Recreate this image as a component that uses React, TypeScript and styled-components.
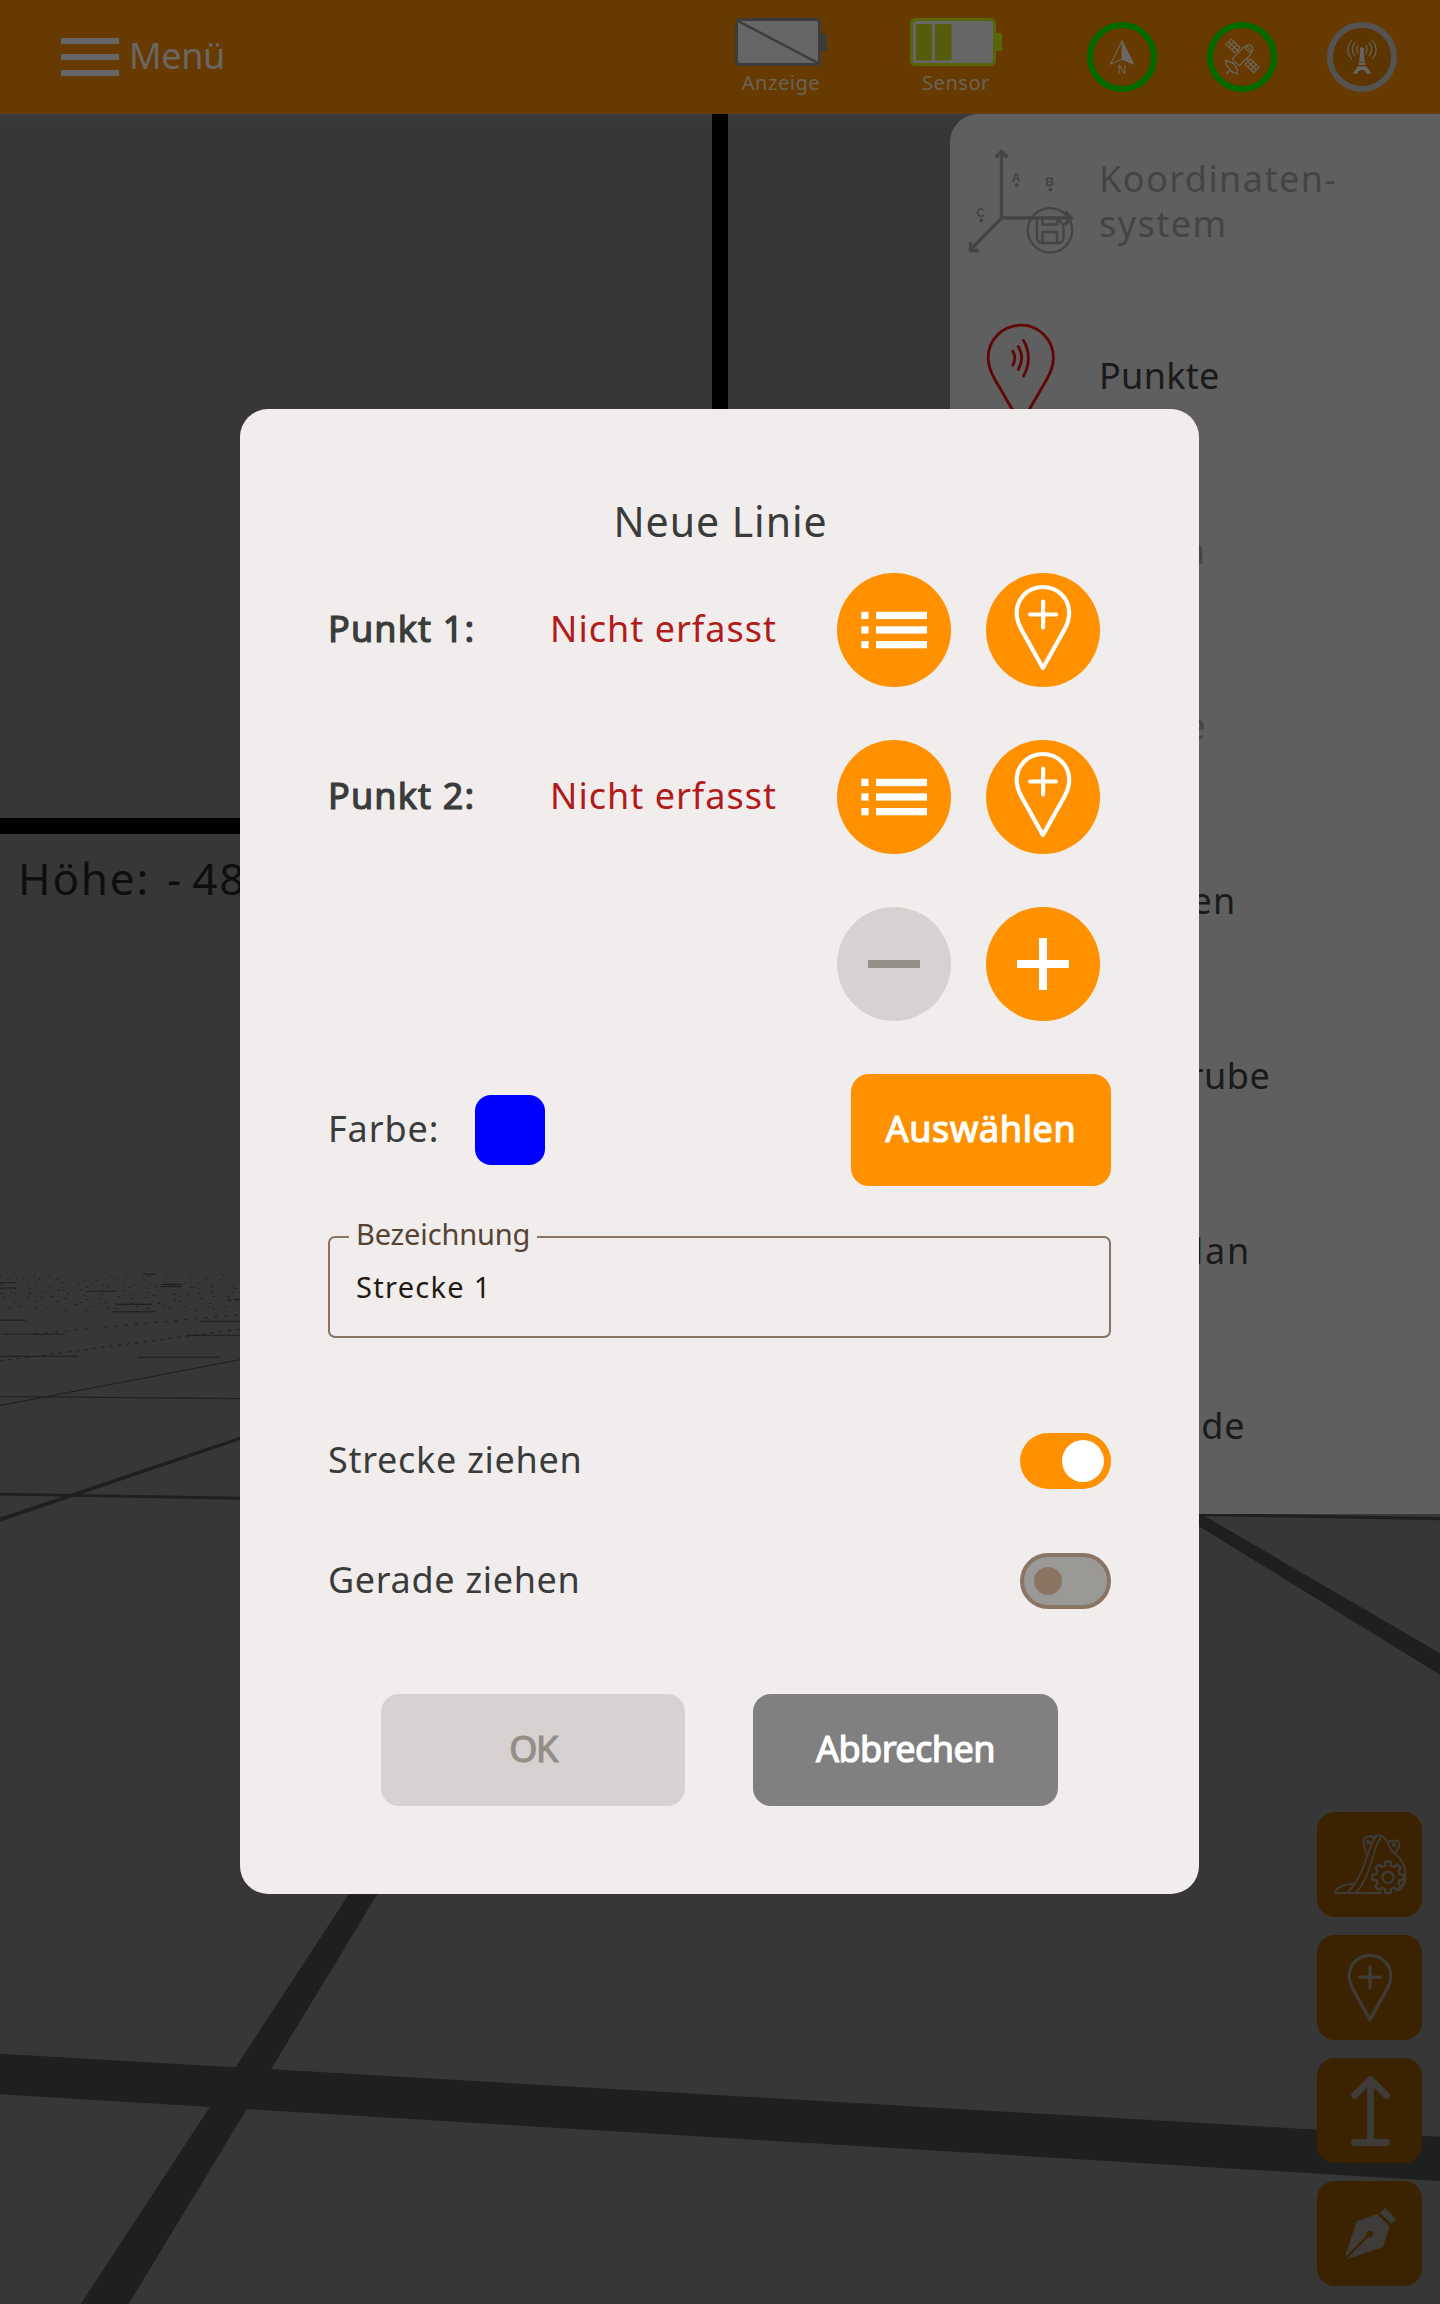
import React from 'react';
import styled, { createGlobalStyle } from 'styled-components';

const GlobalStyle = createGlobalStyle`
  * { box-sizing: border-box; }
  html, body { margin: 0; padding: 0; background: #373737; }
  body { font-family: "Noto Sans", "Open Sans", sans-serif; }
  button, input { font-family: inherit; border: 0; padding: 0; background: none; }
  svg { display: block; flex: none; }
`;

const INK = '#3a3b3b';
const ORANGE = '#ff9100';
const GRID = '#1f1f1f';

const Screen = styled.div`
  position: relative;
  width: 1440px;
  height: 2304px;
  overflow: hidden;
  display: flex;
  flex-direction: column;
  background: #373737;
`;

/* ---------- top bar ---------- */

const TopBar = styled.header`
  height: 114px;
  flex: none;
  display: flex;
  align-items: flex-start;
  justify-content: space-between;
  padding: 0 43px 0 61px;
  background: #663a00;
`;

const MenuButton = styled.button`
  display: flex;
  align-items: center;
  gap: 10px;
  height: 111px;
  color: #6a6663;
  font-size: 36px;
  letter-spacing: -0.4px;
`;

const Burger = styled.span`
  display: flex;
  flex-direction: column;
  gap: 10px;
  margin-top: 3px;
  & > i { display: block; width: 58px; height: 6px; background: #666; }
`;

const StatusGroup = styled.div`
  display: flex;
  align-items: flex-start;
`;

const Battery = styled.div`
  display: flex;
  flex-direction: column;
  align-items: center;
  width: 92px;
  margin: 18px 83px 0 0;
  color: #6d6257;
  font-size: 20px;
  line-height: 24px;
  letter-spacing: 0.55px;
  & > svg { margin-bottom: 5px; }
`;

const Rings = styled.div`
  display: flex;
  gap: 50px;
  margin: 22px 0 0 2px;
`;

const Ring = styled.div<{ $color: string; $fill?: string }>`
  width: 70px;
  height: 70px;
  border-radius: 50%;
  border: 6px solid ${p => p.$color};
  background: ${p => p.$fill ?? 'transparent'};
  & > svg { margin: -6px; }
`;

/* ---------- viewports ---------- */

const UpperViews = styled.section`
  display: grid;
  grid-template-columns: 712px 1fr;
  gap: 16px;
  height: 720px;
  flex: none;
  padding-bottom: 16px;
  background: #000;
`;

const View = styled.div`
  background: linear-gradient(#3d3c3c, #373737 8px);
`;

const SceneView = styled.section`
  position: relative;
  flex: 1;
  background: #373737;
`;

const SceneCanvas = styled.svg`
  position: absolute;
  inset: 0;
`;

const HeightLabel = styled.div`
  position: relative;
  display: flex;
  gap: 17px;
  padding: 14px 0 0 18px;
  color: #0e0e0e;
  font-size: 44px;
  line-height: 60px;
  letter-spacing: 1.8px;
  white-space: nowrap;
`;

const Sign = styled.span`
  letter-spacing: 11px;
`;

/* ---------- drawer ---------- */

const Drawer = styled.nav`
  position: absolute;
  top: 114px;
  right: 0;
  width: 490px;
  height: 1400px;
  overflow: hidden;
  border-top-left-radius: 28px;
  background: #5f5f5f;
`;

const DrawerItem = styled.div<{ $disabled?: boolean; $spacing: number }>`
  display: flex;
  align-items: center;
  gap: 1px;
  height: 175px;
  &:first-child { height: 173px; }
  color: ${p => (p.$disabled ? '#454344' : '#1a1a1a')};
  font-size: 36px;
  line-height: 45px;
  letter-spacing: ${p => p.$spacing}px;
  white-space: pre-line;
`;

const DrawerLabel = styled.span`
  padding-top: 1px;
`;

const DrawerIcon = styled.svg`
  width: 148px;
  height: 100%;
`;

/* ---------- floating buttons ---------- */

const ToolStack = styled.div`
  position: absolute;
  right: 18px;
  bottom: 18px;
  display: flex;
  flex-direction: column;
  gap: 18px;
`;

const ToolButton = styled.button`
  width: 105px;
  height: 105px;
  display: flex;
  align-items: center;
  justify-content: center;
  border-radius: 18px;
  background: #3b2200;
  color: #3f3b38;
`;

/* ---------- dialog ---------- */

const Dialog = styled.section`
  position: absolute;
  left: 240px;
  top: 409px;
  width: 959px;
  height: 1485px;
  padding: 87px 88px 88px;
  display: flex;
  flex-direction: column;
  border-radius: 28px;
  background: #f0edec;
  color: ${INK};
`;

const Title = styled.h1`
  margin: 0 0 27px;
  padding-left: 2px;
  font-size: 41px;
  font-weight: 400;
  line-height: 50px;
  letter-spacing: 0.96px;
  text-align: center;
`;

const PointRow = styled.div`
  display: flex;
  align-items: center;
  height: 114px;
  margin-bottom: 53px;
  padding-right: 11px;
`;

const Text = styled.span<{ $spacing?: number; $strong?: boolean; $color?: string; $width?: number }>`
  font-size: 36px;
  line-height: 50px;
  padding-bottom: 2px;
  white-space: nowrap;
  color: ${p => p.$color ?? INK};
  letter-spacing: ${p => p.$spacing ?? 0}px;
  width: ${p => (p.$width ? `${p.$width}px` : 'auto')};
  -webkit-text-stroke: ${p => (p.$strong ? '1.2px currentColor' : '0')};
`;

const RoundButtons = styled.div`
  display: flex;
  gap: 35px;
  margin-left: auto;
`;

const RoundButton = styled.button<{ $disabled?: boolean; $lift?: number }>`
  width: 114px;
  height: 114px;
  display: flex;
  align-items: center;
  justify-content: center;
  padding-bottom: ${p => p.$lift ?? 0}px;
  border-radius: 50%;
  background: ${p => (p.$disabled ? '#d7d2d1' : ORANGE)};
  color: ${p => (p.$disabled ? '#938f87' : '#fff')};
`;

const ColorRow = styled.div`
  display: flex;
  align-items: center;
  height: 112px;
  margin-bottom: 50px;
  & > button { margin-left: auto; }
`;

const Swatch = styled.span`
  width: 70px;
  height: 70px;
  border-radius: 16px;
  background: #0000ff;
`;

const Button = styled.button<{ $bg: string; $fg: string; $width: number; $spacing: number }>`
  width: ${p => p.$width}px;
  height: 112px;
  padding-bottom: 4px;
  border-radius: 18px;
  background: ${p => p.$bg};
  color: ${p => p.$fg};
  font-size: 36px;
  letter-spacing: ${p => p.$spacing}px;
  -webkit-text-stroke: 1.2px currentColor;
`;

const Field = styled.label`
  position: relative;
  display: flex;
  height: 102px;
  margin-bottom: 95px;
  border: 2px solid #8a7464;
  border-radius: 7px;
`;

const FieldLabel = styled.span`
  position: absolute;
  left: 19px;
  top: -24px;
  width: 188px;
  padding-left: 7px;
  background: #f0edec;
  color: #564334;
  font-size: 29px;
  line-height: 40px;
  letter-spacing: -0.15px;
`;

const FieldInput = styled.input`
  flex: 1;
  padding: 0 26px 2px;
  color: #1f1a14;
  font-size: 29px;
  letter-spacing: 1.3px;
  outline: 0;
`;

const SwitchRow = styled.div`
  display: flex;
  align-items: center;
  justify-content: space-between;
  height: 56px;
  margin-bottom: 64px;
`;

const Switch = styled.span<{ $on?: boolean }>`
  display: flex;
  align-items: center;
  justify-content: ${p => (p.$on ? 'flex-end' : 'flex-start')};
  width: 91px;
  height: 56px;
  padding: ${p => (p.$on ? '0 7px' : '0 10px')};
  border: ${p => (p.$on ? '0' : '4px solid #8a7464')};
  border-radius: 28px;
  background: ${p => (p.$on ? ORANGE : '#9b9996')};
  &::after {
    content: "";
    width: ${p => (p.$on ? 42 : 28)}px;
    height: ${p => (p.$on ? 42 : 28)}px;
    border-radius: 50%;
    background: ${p => (p.$on ? '#fff' : '#8a7464')};
  }
`;

const Actions = styled.div`
  display: flex;
  gap: 68px;
  margin: 21px 0 0 53px;
`;

/* ---------- icons ---------- */

const PinPlus = ({ height }: { height: number }) => (
  <svg width={(height * 58) / 87} height={height} viewBox="28.3 12 58 87" fill="none" stroke="currentColor" strokeWidth="4.2" strokeLinecap="round" strokeLinejoin="round">
    <path d="M57.2 15C42.5 15 31 26.5 31 41c0 6 2 11.5 5 17l21.2 38 21.3-38c3-5.5 5-11 5-17C83.5 26.5 72 15 57.2 15Z" />
    <path d="M57.4 29.5v26M44.4 42.500h26" />
  </svg>
);

const ListIcon = () => (
  <svg width="114" height="114" viewBox="0 0 114 114" fill="currentColor">
    {[38.8, 53.3, 68].map(y => (
      <React.Fragment key={y}>
        <rect x="24.3" y={y} width="7.3" height="7.3" />
        <rect x="39" y={y} width="51" height="7.3" />
      </React.Fragment>
    ))}
  </svg>
);

const SignIcon = ({ plus }: { plus?: boolean }) => (
  <svg width="52" height="52" viewBox="0 0 52 52" fill="currentColor">
    <rect x="0" y="22" width="52" height="8" />
    {plus && <rect x="22" y="0" width="8" height="52" />}
  </svg>
);

const EmptyBattery = () => (
  <svg width="92" height="48" viewBox="0 0 92 48">
    <rect x="84" y="15.5" width="8" height="17.5" rx="1.5" fill="#3c3c3c" />
    <rect x="1.5" y="1.5" width="83" height="45" rx="4" fill="#666" stroke="#3c3c3c" strokeWidth="3" />
    <path d="M3 3l80 42" stroke="#3c3c3c" strokeWidth="2.4" />
  </svg>
);

const HalfBattery = () => (
  <svg width="92" height="48" viewBox="0 0 92 48">
    <rect x="84" y="15" width="8" height="18" fill="#586609" />
    <rect x="1.5" y="1.5" width="83" height="45" rx="4" fill="#666" stroke="#586609" strokeWidth="3" />
    <rect x="6" y="6" width="16" height="36.5" rx="1.5" fill="#565d0a" />
    <rect x="25" y="6" width="16.5" height="36.5" rx="1.5" fill="#565d0a" />
  </svg>
);

const CompassIcon = () => (
  <svg width="70" height="70" viewBox="0 0 70 70" fill="none" stroke="#6b6763">
    <path d="M35 19L23.5 42 35 37.3 46.5 42Z" strokeWidth="1.1" />
    <path d="M35 19v18.3L46.5 42Z" fill="#6b6763" strokeWidth="1" />
    <text x="35" y="51.7" fontSize="12" fontFamily="Liberation Sans, sans-serif" textAnchor="middle" fill="#6b6763" stroke="none">N</text>
  </svg>
);

const SatelliteIcon = () => (
  <svg width="70" height="70" viewBox="0 0 70 70" fill="none" stroke="#6e6a64" strokeWidth="1.1">
    <g transform="translate(35 34) rotate(45)">
      <rect x="-5" y="-8" width="10" height="17" rx="1" />
      <path d="M-4 -8v-2.500a4 3 0 0 1 8 0v2.500M-4 -10.300h8" />
      <path d="M-5 -1h-3M5 -1h3" />
      <rect x="-19.500" y="-4.500" width="12" height="7.500" />
      <path d="M-15.500 -4.500v7.500M-11.500 -4.500v7.500M-19.500 -.7h12" />
      <rect x="8" y="-4" width="12" height="7.500" />
      <path d="M12 -4v7.500M16 -4v7.500M8 -.2h12" />
    </g>
    <path d="M18.5 38.5c0 5.500 5.500 12.500 12 13 .6-6.500-5-12.500-12-13ZM18.500 38.500l8 2.500 3 5.500M23.500 48l-3.500 3M19 49.500l2.500 2.500" />
  </svg>
);

const TowerIcon = () => (
  <svg width="70" height="70" viewBox="0 0 70 70" fill="none" stroke="#666360" strokeWidth="1.200" strokeLinecap="round">
    <circle cx="35" cy="27.5" r="2.3" fill="#666360" stroke="none" />
    <path d="M33.400 28h3.200l1.200 11.800h-5.600ZM31.500 40.500h7v2.400h-7ZM31 44.200h8l6 7.600h-5.500c-1.200-5-7.800-5-9 0H25.500Z" fill="#666360" stroke="none" />
    <path d="M31 23.500c-1.500 2.300-1.500 5 0 7.300M27.800 20.800c-3 4-3 9 0 13M24.500 18.500c-4.600 5.800-4.600 12.700 0 18.500" />
    <path d="M39 23.500c1.500 2.300 1.500 5 0 7.300M42.200 20.800c3 4 3 9 0 13M45.500 18.500c4.600 5.800 4.600 12.700 0 18.500" />
  </svg>
);

const CoordinateIcon = () => (
  <DrawerIcon viewBox="950 114 148 173" fill="none" stroke="#454344" strokeWidth="3.4">
    <path d="M1001.5 152v66H1070M1001.5 218L971 249" />
    <path d="M995.5 157.5l6-6 6 6M1065 211.500l6.300 6.500-6.300 6.500M970.500 242v8.500h8.500" />
    <circle cx="1050" cy="230.3" r="22.2" strokeWidth="2.2" />
    <path d="M1037 218.500v19.500a5 5 0 0 0 5 5h16.500a5 5 0 0 0 5-5v-13l-6-6.500M1042.500 218.500v6h15v-6M1042.500 243v-11h14.500v11" strokeWidth="2.400" />
    <g fill="#454344" stroke="none" fontFamily="Liberation Sans, sans-serif" fontSize="12" fontWeight="700" textAnchor="middle">
      <text x="1016.7" y="182">A</text>
      <text x="1050.3" y="186">B</text>
      <text x="981.3" y="217">C</text>
      <circle cx="1016.7" cy="185.3" r="2" />
      <circle cx="1050.3" cy="189.5" r="2" />
      <circle cx="981.3" cy="220.5" r="2" />
    </g>
  </DrawerIcon>
);

const SensorPinIcon = () => (
  <DrawerIcon viewBox="950 287 148 175" fill="none" stroke="#620505" strokeWidth="2.8" strokeLinecap="round">
    <path d="M1020.800 325.200c-18.300 0-32.600 14.600-32.600 32.500 0 7.500 2.500 14 6 20.500l26.600 46 26.600-46c3.500-6.500 6-13 6-20.500 0-17.900-14.300-32.500-32.600-32.500Z" />
    <path d="M1012.800 351.200c2.600 4.500 2.600 9.500 0 14M1018.300 346.500c4.500 7.500 4.500 15.500 0 23M1023.500 340.500c6.500 11 6.500 24.500 0 35.500" />
  </DrawerIcon>
);

const gearPath = (cx: number, cy: number, outer: number, inner: number) => {
  const pts: string[] = [];
  for (let i = 0; i < 8; i++) {
    const a = (i * Math.PI) / 4 - Math.PI / 2;
    const at = (da: number, r: number) =>
      `${(cx + Math.cos(a + da) * r).toFixed(1)} ${(cy + Math.sin(a + da) * r).toFixed(1)}`;
    pts.push(at(-0.24, inner), at(-0.17, outer), at(0.17, outer), at(0.24, inner));
  }
  return `M${pts.join('L')}Z`;
};

const BucketIcon = () => (
  <svg width="105" height="105" viewBox="0 0 105 105" fill="none" stroke="currentColor" strokeWidth="1.9" strokeLinejoin="round" strokeLinecap="round">
    <path d="M64 81H19.500c-1.500 0-1.500-1.500-.5-2.500 4-5 10-7 18.500-6.500" />
    <path d="M30.500 80.500C43 68 47 53 51.500 40.500c2.500-7.500 5-14 8.500-17M39 80.500c10-11 14-26 17.500-37.500 2-7 4.500-13.500 7.500-18.500" />
    <path d="M55.500 26c3-3 9.500-4 12.500.5 3 4 4.500 8.500 6.500 12 4 4.500 12 8 13.500 20v12" />
    <path d="M56 25c-4-1.500-9.500-.5-9.500 4 0 4 1.500 9 3 13M71.500 29.500c4-1 10.500-2 10.800 1.500 0 3.500-1.500 7-4.300 10" />
    <circle cx="51.500" cy="29.800" r="1.400" />
    <circle cx="77.200" cy="32.800" r="1.400" />
    <path d={gearPath(71, 65.3, 15.8, 12)} fill="#3b2200" strokeWidth="2.400" />
    <circle cx="71" cy="65.300" r="5.600" strokeWidth="2.400" />
    <path d="M79 78c4 0 6.500-3 7.500-7" strokeWidth="3" />
  </svg>
);

const RaiseIcon = () => (
  <svg width="105" height="105" viewBox="0 0 105 105" fill="none" stroke="currentColor" strokeWidth="6.800" strokeLinecap="round" strokeLinejoin="round">
    <path d="M37.500 37.500l16-16 16 16M53.500 22v62M37.500 84.500h32" />
  </svg>
);

const PenIcon = () => (
  <svg width="105" height="105" viewBox="0 0 105 105" fill="currentColor">
    <path d="M27.700 76.300L39.700 40l20.600-7 12.400 12.300L66 66 31 77.700ZM68 26.700l11 11.600-4.700 4.700-11.600-11.300Z" />
    <path d="M28 78l24.700-25" stroke="#3b2200" strokeWidth="2" />
    <circle cx="52.700" cy="53" r="3.200" fill="#3b2200" />
  </svg>
);

/* ---------- perspective ground grid ---------- */

const farLines: [number, number, number][] = [
  [0, 78, 1356.3], [138, 220, 1357.3], [3, 65, 1334.2], [186, 240, 1335.2],
  [0, 26, 1320.2], [200, 240, 1321.3], [112, 155, 1311.7], [115, 152, 1304.4],
  [89, 116, 1291.2], [162, 182, 1284.6], [160, 182, 1286.6], [0, 16, 1282.6],
  [0, 16, 1288], [143, 156, 1274.3], [234, 240, 1299.6],
];

/* Aliased remains of grid lines near the horizon. */
const specks = (() => {
  const list: { x: number; y: number; w: number }[] = [];
  let seed = 7;
  const rand = () => {
    seed = (seed * 16807) % 2147483647;
    return seed / 2147483647;
  };
  for (let row = 0; row < 13; row++) {
    const y = 1273 + row * 1.7 + row * row * 0.1;
    const step = 17 + row * 0.5;
    for (let x = rand() * step; x < 240; x += step * (0.6 + rand() * 0.8)) {
      list.push({ x, y: Math.round(y + rand() * 3), w: 1 + row / 7 });
    }
  }
  return list;
})();

const Ground = () => (
  <SceneCanvas width="1440" height="1470" viewBox="0 834 1440 1470" fill={GRID} stroke="none">
    <path d="M0 2053.7L1440 2136.7V2181L0 2094.3Z" />
    <path d="M349 1894h28.4L128.6 2304H80.8Z" />
    <path d="M1199 1513.5L1205 1516.3 1440 1653.3V1674.7L1199 1526.3Z" />
    <path d="M0 1492.7L1440 1517v3.2L0 1495.5Z" />
    <path d="M0 1517.5L240 1436.8V1440L0 1521.8Z" />
    <g stroke={GRID} strokeWidth="1.1" fill="none">
      <path d="M0 1405.500L240 1359.800M0 1396.500L240 1398.600" />
      <path d="M0 1361L240 1329.200" strokeDasharray="3.5 5" />
      <path d="M35 1333.800L240 1314.500" strokeDasharray="3 7" />
      {farLines.map(([a, b, y]) => <path key={`${a}-${y}`} d={`M${a} ${y}H${b}`} />)}
    </g>
    {specks.map((s, i) => <rect key={i} x={s.x} y={s.y} width={s.w} height="0.9" />)}
  </SceneCanvas>
);

/* ---------- page ---------- */

const drawerItems = [
  { label: 'Koordinaten-\nsystem', spacing: 1.45, disabled: true, icon: <CoordinateIcon /> },
  { label: 'Punkte', spacing: 0.3, icon: <SensorPinIcon /> },
  { label: 'Linien', spacing: 0.75, disabled: true },
  { label: 'Fläche', spacing: -0.3, disabled: true },
  { label: 'Trassen', spacing: 1.1 },
  { label: 'Baugrube', spacing: 0.45 },
  { label: 'Bauplan', spacing: 1.76 },
  { label: 'Gelände', spacing: 0.8 },
];

export default function App() {
  return (
    <>
      <GlobalStyle />
      <Screen>
        <TopBar>
          <MenuButton>
            <Burger><i /><i /><i /></Burger>
            Menü
          </MenuButton>
          <StatusGroup>
            <Battery><EmptyBattery />Anzeige</Battery>
            <Battery><HalfBattery />Sensor</Battery>
            <Rings>
              <Ring $color="#006a00"><CompassIcon /></Ring>
              <Ring $color="#006a00"><SatelliteIcon /></Ring>
              <Ring $color="#545352" $fill="#5c3500"><TowerIcon /></Ring>
            </Rings>
          </StatusGroup>
        </TopBar>

        <UpperViews><View /><View /></UpperViews>
        <SceneView>
          <Ground />
          <HeightLabel>
            <span>Höhe:</span>
            <span><Sign>-</Sign>48</span>
          </HeightLabel>
        </SceneView>

        <Drawer>
          {drawerItems.map(item => (
            <DrawerItem key={item.label} $disabled={item.disabled} $spacing={item.spacing}>
              {item.icon ?? <DrawerIcon />}
              <DrawerLabel>{item.label}</DrawerLabel>
            </DrawerItem>
          ))}
        </Drawer>

        <ToolStack>
          <ToolButton><BucketIcon /></ToolButton>
          <ToolButton><PinPlus height={69} /></ToolButton>
          <ToolButton><RaiseIcon /></ToolButton>
          <ToolButton><PenIcon /></ToolButton>
        </ToolStack>

        <Dialog role="dialog">
          <Title>Neue Linie</Title>

          {['Punkt 1:', 'Punkt 2:'].map(name => (
            <PointRow key={name}>
              <Text $strong $spacing={1.15} $width={222}>{name}</Text>
              <Text $color="#b11b1b" $spacing={1.02}>Nicht erfasst</Text>
              <RoundButtons>
                <RoundButton><ListIcon /></RoundButton>
                <RoundButton $lift={5}><PinPlus height={87} /></RoundButton>
              </RoundButtons>
            </PointRow>
          ))}
          <PointRow>
            <RoundButtons>
              <RoundButton $disabled><SignIcon /></RoundButton>
              <RoundButton><SignIcon plus /></RoundButton>
            </RoundButtons>
          </PointRow>

          <ColorRow>
            <Text $spacing={0.9} $width={146.5}>Farbe:</Text>
            <Swatch />
            <Button $bg={ORANGE} $fg="#fff" $width={260} $spacing={0.65}>Auswählen</Button>
          </ColorRow>

          <Field>
            <FieldLabel>Bezeichnung</FieldLabel>
            <FieldInput defaultValue="Strecke 1" />
          </Field>

          <SwitchRow>
            <Text $spacing={0.7}>Strecke ziehen</Text>
            <Switch $on />
          </SwitchRow>
          <SwitchRow>
            <Text $spacing={0.65}>Gerade ziehen</Text>
            <Switch />
          </SwitchRow>

          <Actions>
            <Button $bg="#d7d2d1" $fg="#938f87" $width={304} $spacing={-1.4}>OK</Button>
            <Button $bg="#808080" $fg="#fff" $width={305} $spacing={-0.55}>Abbrechen</Button>
          </Actions>
        </Dialog>
      </Screen>
    </>
  );
}
